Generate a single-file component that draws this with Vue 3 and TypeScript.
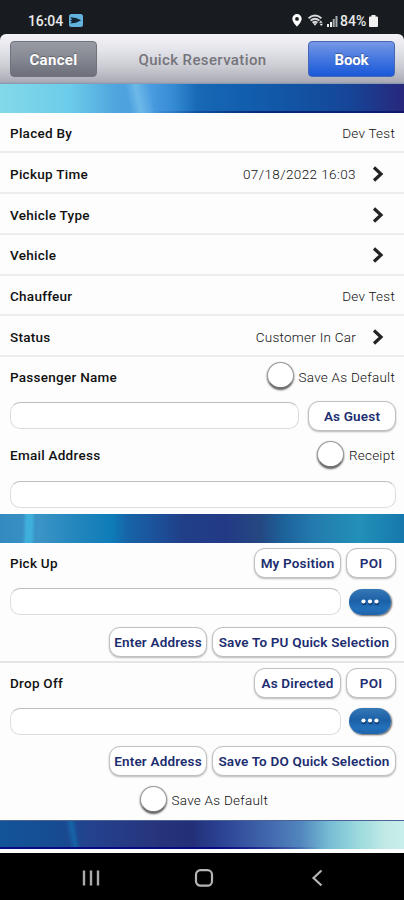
<script setup lang="ts">
import { ref } from 'vue'

interface DetailRow {
  label: string
  value?: string
  arrow?: boolean
}

interface Stop {
  title: string
  kind: string
  first: string
  save: string
}

const rows: DetailRow[] = [
  { label: 'Placed By', value: 'Dev Test' },
  { label: 'Pickup Time', value: '07/18/2022 16:03', arrow: true },
  { label: 'Vehicle Type', arrow: true },
  { label: 'Vehicle', arrow: true },
  { label: 'Chauffeur', value: 'Dev Test' },
  { label: 'Status', value: 'Customer In Car', arrow: true },
]

const stops: Stop[] = [
  { title: 'Pick Up', kind: 'pickup', first: 'My Position', save: 'Save To PU Quick Selection' },
  { title: 'Drop Off', kind: 'dropoff', first: 'As Directed', save: 'Save To DO Quick Selection' },
]

const passenger = ref('')
const email = ref('')
const addresses = ref<string[]>(['', ''])
</script>

<template>
  <div class="phone">
    <div class="statusbar">
      <span class="clock">16:04</span>
      <svg class="app-icon" width="14" height="13" viewBox="0 0 14 13">
        <rect width="14" height="13" rx="2.5" fill="#62b4df" />
        <path d="M1 3.2 7 4l5.2 2.3L7 8.8l-6 .6 2-1.6L1 6.6l2-1.4z" fill="#142634" />
      </svg>
      <span class="grow"></span>
      <svg class="pin" width="10" height="13" viewBox="0 0 10 13">
        <path fill-rule="evenodd" d="M5 0a4.7 4.7 0 0 0-4.7 4.8C.3 8 5 12.7 5 12.7S9.7 8 9.7 4.8A4.7 4.7 0 0 0 5 0zm0 3a1.9 1.9 0 1 1 0 3.8A1.9 1.9 0 0 1 5 3z" fill="#fff" />
      </svg>
      <svg class="wifi" width="16" height="13" viewBox="0 0 16 13">
        <g fill="none" stroke="#d8dadc" stroke-width="1.9">
          <path d="M.6 4.2q6.4-5.4 12.8 0" />
          <path d="M2.6 6.6q4.4-3.8 8.8 0" />
          <path d="M4.6 8.8q2.4-2 4.8 0" />
        </g>
        <path d="M5 9.3h4L7 11.8zM11 8.8l1.8-2.300 1.800 2.300zM11.500 9.800H15l-1.700 2.200z" fill="#e4e6e8" />
      </svg>
      <svg class="signal" width="11" height="12" viewBox="0 0 11 12">
        <path d="M0 9h2v3H0zM3 7h2v5H3z" fill="#eee" />
        <path d="M5.7 4h2v8h-2zM8.5 1h2v11h-2z" fill="#a9acaf" />
      </svg>
      <span class="percent">84%</span>
      <svg class="battery" width="9" height="12" viewBox="0 0 9 12">
        <path d="M2.5 0h4v1.5H8q1 0 1 1V11q0 1-1 1H1q-1 0-1-1V2.5q0-1 1-1h1.5z" fill="#f1f1f1" />
      </svg>
    </div>

    <div class="header-wrap">
      <header class="header">
        <button class="nav-btn cancel">Cancel</button>
        <h1>Quick Reservation</h1>
        <button class="nav-btn book">Book</button>
      </header>
    </div>

    <div class="band band-top"></div>

    <section class="details">
      <div v-for="row in rows" :key="row.label" class="row">
        <span class="label">{{ row.label }}</span>
        <span v-if="row.value" class="value" :class="{ date: row.label === 'Pickup Time' }">{{ row.value }}</span>
        <svg v-if="row.arrow" class="chevron" width="12" height="16" viewBox="0 0 12 16">
          <path d="M2 1.5 9 8 2 14.5" fill="none" stroke="#222" stroke-width="3.2" />
        </svg>
      </div>
    </section>

    <section class="contact">
      <div class="line line-name">
        <span class="label">Passenger Name</span>
        <label class="toggle"><i class="knob"></i>Save As Default</label>
      </div>
      <div class="line line-guest">
        <input v-model="passenger" class="field" type="text" />
        <button class="pill guest">As Guest</button>
      </div>
      <div class="line line-email">
        <span class="label">Email Address</span>
        <label class="toggle"><i class="knob"></i>Receipt</label>
      </div>
      <div class="line line-mail">
        <input v-model="email" class="field" type="text" />
      </div>
    </section>

    <div class="band band-mid"></div>

    <section v-for="(stop, i) in stops" :key="stop.kind" class="stop" :class="stop.kind">
      <div class="line stop-head">
        <span class="label">{{ stop.title }}</span>
        <button class="pill first">{{ stop.first }}</button>
        <button class="pill poi">POI</button>
      </div>
      <div class="line stop-field">
        <input v-model="addresses[i]" class="field" type="text" />
        <button class="more" aria-label="More">
          <svg width="20" height="8" viewBox="0 0 20 8">
            <g fill="#0d3b73" transform="translate(.5 1.5)">
              <circle cx="3.5" cy="3.5" r="2.2" /><circle cx="10" cy="3.5" r="2.2" /><circle cx="16.5" cy="3.5" r="2.2" />
            </g>
            <g fill="#fff"><circle cx="3.5" cy="3.5" r="2.1" /><circle cx="10" cy="3.5" r="2.1" /><circle cx="16.5" cy="3.5" r="2.1" /></g>
          </svg>
        </button>
      </div>
      <div class="line stop-actions">
        <button class="pill enter">Enter Address</button>
        <button class="pill save">{{ stop.save }}</button>
      </div>
      <div v-if="stop.kind === 'dropoff'" class="line stop-default">
        <label class="toggle"><i class="knob"></i>Save As Default</label>
      </div>
    </section>

    <div class="band band-bottom"></div>

    <nav class="android">
      <svg width="18" height="18" viewBox="0 0 18 18"><path d="M2 1.5v15M9 1.5v15M16 1.5v15" stroke="#aaa" stroke-width="2.4" /></svg>
      <svg width="20" height="18" viewBox="0 0 20 18"><rect x="2" y="1.2" width="16" height="15.5" rx="4.5" fill="none" stroke="#b5b5b5" stroke-width="2.2" /></svg>
      <svg width="12" height="18" viewBox="0 0 12 18"><path d="M10.5 1.500 2.500 9 10.500 16.500" fill="none" stroke="#b5b5b5" stroke-width="2.2" /></svg>
    </nav>
  </div>
</template>

<style>
body {
  background: #fff;
}
</style>

<style scoped>
.phone {
  width: 404px;
  height: 900px;
  display: flex;
  flex-direction: column;
  overflow: hidden;
  background: #fdfdfd;
  font-family: Roboto, 'Liberation Sans', sans-serif;
  font-size: 13.5px;
  color: #111;
}
.phone * {
  box-sizing: border-box;
}
.phone > * {
  flex-shrink: 0;
}
button,
input {
  font-family: inherit;
  margin: 0;
  padding: 0;
}
svg {
  display: block;
  flex: none;
}
.statusbar {
  height: 34px;
  background: #181c20;
  display: flex;
  align-items: center;
  padding: 7px 26px 0 28px;
  color: #e9e9e9;
  font-size: 14px;
  font-weight: 500;
}
.clock {
  width: 41px;
  letter-spacing: -0.1px;
}
.grow {
  flex: 1;
}
.wifi {
  margin-left: 6px;
}
.signal {
  margin-left: 3px;
}
.percent {
  margin-left: 2px;
  width: 29px;
}
.header-wrap {
  background: #181c20;
}
.header {
  height: 50px;
  display: flex;
  align-items: center;
  justify-content: space-between;
  padding: 0 9px 0 10px;
  border-radius: 6px 6px 0 0;
  background: linear-gradient(#f3f3f6 0, #e5e5ec 30%, #c9c9d1 68%, #aaabb5 96%, #8291b0 100%);
}
h1 {
  margin: 2px 0 0;
  font-size: 15px;
  font-weight: 500;
  color: #75757b;
  letter-spacing: 0.38px;
}
.nav-btn {
  width: 87px;
  height: 36px;
  border-radius: 4px;
  color: #fff;
  font-size: 15px;
  font-weight: 700;
  text-shadow: 0 -1px 1px rgba(0, 0, 0, 0.3);
  padding-top: 1px;
}
.cancel {
  border: 1px solid #70727c;
  background: linear-gradient(#9a9ca5, #858791 50%, #6c6e79);
  letter-spacing: 0.35px;
}
.book {
  border: 1px solid #4466b5;
  background: linear-gradient(#7798e8, #4477df 50%, #1958d8);
  letter-spacing: -0.2px;
}
.band {
  height: 29px;
}
.band-top {
  height: 28.5px;
  background:
    linear-gradient(90deg, rgba(0, 10, 90, 0) 150px, rgba(0, 10, 90, 0.6) 260px) bottom / 100% 2px no-repeat,
    linear-gradient(78deg, transparent 128px, rgba(150, 215, 245, 0.45) 138px, transparent 152px),
    linear-gradient(90deg, #83d9e7 0, #6cccea 70px, #4fa5dd 115px, #4b9de0 150px, #348ad3 174px, #1768b5 198px, #125eae 245px, #1350a0 310px, #164597 350px, #28277c 404px);
}
.band-mid {
  background:
    linear-gradient(92deg, transparent 23px, rgba(64, 184, 226, 0.75) 27px, rgba(64, 184, 226, 0.75) 32px, transparent 36px),
    linear-gradient(90deg, #328ac0 0, #3b94c5 40px, #2486bd 75px, #0e7cb9 112px, #1764a8 127px, #1b529b 155px, #203f88 182px, #233a86 225px, #244781 260px, #1c629b 284px, #237bad 314px, #2290b8 360px, #1678ad 404px);
}
.band-bottom {
  border-top: 1px solid #4b6297;
  background:
    linear-gradient(90deg, #080a82 0, #080a82 215px, rgba(8, 10, 130, 0) 320px) bottom / 100% 2px no-repeat,
    linear-gradient(-100deg, transparent 323px, rgba(18, 120, 185, 0.6) 328px, transparent 334px),
    linear-gradient(90deg, #135499 0, #174b91 60px, #24428e 90px, #27347b 160px, #233078 192px, #2b4193 220px, #4369ae 270px, #5185bd 300px, #77bdd5 330px, #9ddbdd 360px, #c1e9e6 385px, #c9efec 404px);
}
.details {
  height: 244.5px;
  display: grid;
  grid-template-rows: repeat(6, 1fr);
}
.row {
  display: flex;
  align-items: center;
  padding: 2.4px 20px 0 10px;
  border-bottom: 2px solid #ededed;
}
.label {
  flex: 1;
  font-size: 13.5px;
  font-weight: 500;
  letter-spacing: 0.27px;
}
.value {
  font-weight: 300;
  color: #111;
  letter-spacing: 0.25px;
}
.date {
  letter-spacing: 0.4px;
}
.row .value:last-child {
  margin-right: -11px;
}
.chevron {
  margin-left: 16px;
}
.contact {
  height: 157px;
}
.line {
  display: flex;
  align-items: center;
  padding: 0 8px 0 10px;
}
.toggle {
  display: flex;
  align-items: center;
  font-weight: 300;
  letter-spacing: 0.25px;
  color: #111;
  padding-right: 1px;
}
.knob {
  width: 27px;
  height: 27px;
  margin-right: 4.5px;
  border: 1.5px solid #999;
  border-bottom: 2px solid #727272;
  border-radius: 50%;
  background: #fff;
  box-shadow: 0 1px 2px #555;
}
.line-name {
  height: 39px;
}
.line-guest {
  height: 39px;
}
.line-email {
  height: 40px;
}
.line-mail {
  height: 39px;
}
.line-name .knob,
.line-email .knob {
  margin-top: -2px;
}
.field {
  flex: 1;
  min-width: 0;
  height: 27px;
  border: 1px solid #ddd;
  border-top-color: #bdbdbd;
  border-radius: 10px;
  background: #fff;
  outline: 0;
}
.pill {
  flex: none;
  height: 30px;
  border: 1px solid #c0c0c0;
  border-radius: 11px;
  background: #fff;
  box-shadow: 0 1px 2px rgba(0, 0, 0, 0.28);
  color: #1c2d70;
  font-size: 13.5px;
  font-weight: 600;
  letter-spacing: 0.18px;
  white-space: nowrap;
}
.guest {
  width: 88px;
  margin-left: 9px;
}
.stop {
  height: 119.5px;
}
.pickup {
  border-bottom: 2px solid #e4e4e4;
}
.dropoff {
  height: 157.5px;
}
.stop-head {
  height: 40px;
}
.first {
  width: 87px;
}
.poi {
  width: 50px;
  margin-left: 5px;
}
.stop-field {
  height: 37px;
}
.more {
  width: 42px;
  height: 26px;
  margin: 0 5px 0 8px;
  display: flex;
  align-items: center;
  justify-content: center;
  border: 0;
  border-radius: 13px;
  background: linear-gradient(#3679b7, #1c60a7 45%, #2370ba 75%, #1d64ac);
  box-shadow: 1px 1px 2px #555;
}
.stop-actions {
  height: 43px;
  justify-content: flex-end;
}
.enter {
  width: 98px;
}
.save {
  width: 184px;
  margin-left: 5px;
}
.stop-default {
  height: 35px;
  padding-left: 140px;
}
.stop-default .knob {
  margin-top: -1px;
}
.android {
  flex: 1;
  margin-top: 4px;
  display: flex;
  align-items: center;
  background: #000;
  padding: 2px 81px 0 82px;
  justify-content: space-between;
}
.android svg:nth-child(2) {
  margin-right: 3px;
}
</style>
